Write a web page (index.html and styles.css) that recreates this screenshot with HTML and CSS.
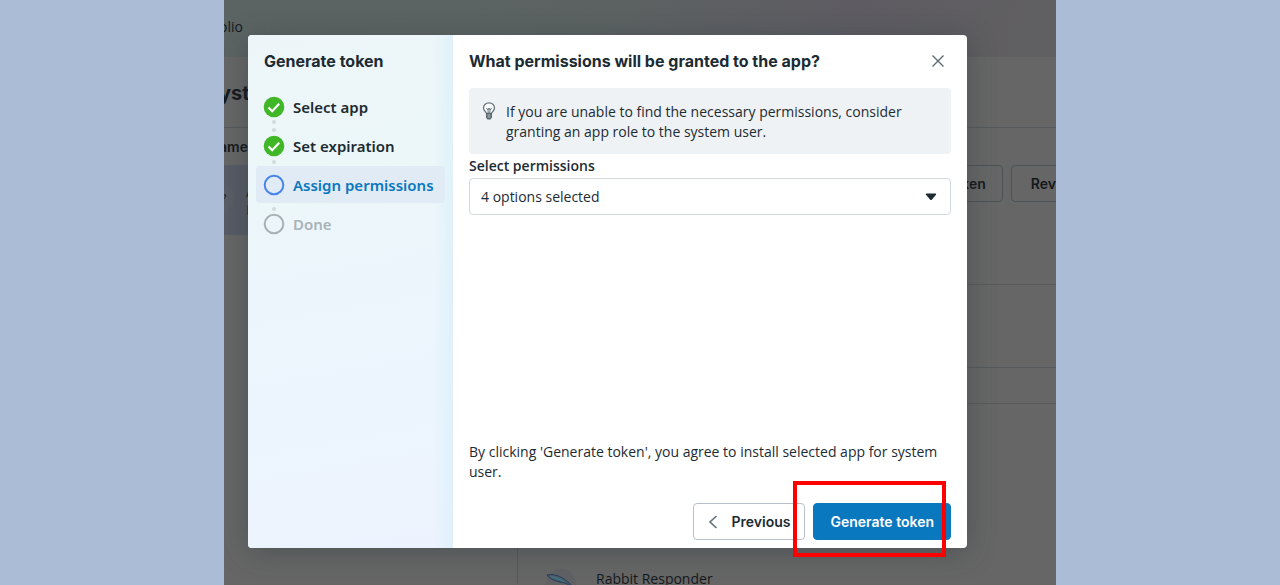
FILE: index.html
```html
<!DOCTYPE html>
<html lang="en">
<head>
  <meta charset="UTF-8">
  <title>Generate token</title>
  <link rel="stylesheet" href="styles.css">
</head>

<body>
  <div class="screen">
    <!-- page behind the dialog -->
    <div class="page">
      <header class="topbar">olio</header>
      <h1 class="page-title">ystem users</h1>
      <div class="columns">
        <div class="users">
          <div class="users-head">ame</div>
          <div class="user">
            <svg class="user-icon" width="30" height="30" viewBox="0 0 30 30">
              <circle cx="15" cy="15" r="15" fill="#5a5d65"/>
              <path d="M13 12h9q0 3-4 5l-3 3M21 12l-6 3" fill="none" stroke="#25292e"/>
            </svg>
            <div>
              <div>Admin</div>
              <div class="user-id">ID: 615</div>
            </div>
          </div>
        </div>
        <div class="detail">
          <div class="actions">
            <button class="page-button">Generate token</button>
            <button class="page-button">Revoke tokens</button>
          </div>
          <div class="info"></div>
          <div class="tabs"></div>
          <div class="asset">
            <svg width="30" height="30" viewBox="0 0 30 30">
              <circle cx="15" cy="15" r="15" fill="#5f6164"/>
              <path d="M1 6c5-1 11 0 17 4 4 3 7 5 8 8-5-4-8-4-12-5C9 12 4 10 1 6z" fill="#4d6069" stroke="#26385c"/>
              <path d="M5 8c5 1 9 2 13 5" fill="none" stroke="#2f7f92"/>
            </svg>
            <span>Rabbit Responder</span>
          </div>
        </div>
      </div>
    </div>

    <div class="dialog" role="dialog" aria-labelledby="dialog-title">
      <div class="steps">
        <h2>Generate token</h2>
        <ol>
          <li class="done">
            <svg width="22" height="22" viewBox="0 0 22 22">
              <circle cx="11" cy="11" r="10.3" fill="#3fb726"/>
              <path d="M5.5 11.5l3.7 3.7 7-7.4" fill="none" stroke="#fff" stroke-width="2.2"/>
            </svg>
            Select app
          </li>
          <li class="done">
            <svg width="22" height="22" viewBox="0 0 22 22">
              <circle cx="11" cy="11" r="10.3" fill="#3fb726"/>
              <path d="M5.5 11.5l3.7 3.7 7-7.4" fill="none" stroke="#fff" stroke-width="2.2"/>
            </svg>
            Set expiration
          </li>
          <li class="current">
            <svg width="22" height="22" viewBox="0 0 22 22">
              <circle cx="11" cy="11" r="9.3" fill="none" stroke="#4684ea" stroke-width="2"/>
            </svg>
            Assign permissions
          </li>
          <li class="todo">
            <svg width="22" height="22" viewBox="0 0 22 22">
              <circle cx="11" cy="11" r="9.3" fill="none" stroke="#aab1b5" stroke-width="2"/>
            </svg>
            Done
          </li>
        </ol>
      </div>

      <div class="content">
        <div class="content-head">
          <h2 id="dialog-title">What permissions will be granted to the app?</h2>
          <button class="close" aria-label="Close">
            <svg width="14" height="14" viewBox="0 0 14 14">
              <path d="M1.5 1.5l11 11M12.5 1.5l-11 11" fill="none" stroke="#5d6b73" stroke-width="1.4"/>
            </svg>
          </button>
        </div>

        <div class="tip">
          <svg width="14" height="18" viewBox="0 0 14 18">
            <path d="M4.5 11.5C4.3 10 1.5 9 1.5 6a5.5 5.2 0 0 1 11 0c0 3-2.8 4-3 5.500z" fill="#fafcfd" stroke="#68757c" stroke-width="1.3"/>
            <path d="M4.5 6l1.500 2 1-2 1 2 1.500-2M6 8l.3 4M8 8l-.3 4" fill="none" stroke="#68757c"/>
            <path d="M4 11h6v4.500L8.500 17.500h-3L4 15.500z" fill="#5a6870"/>
            <path d="M5.500 13h3M5.500 15h3" stroke="#b8c1c7"/>
          </svg>
          <p>If you are unable to find the necessary permissions, consider granting an app role to the system user.</p>
        </div>

        <label for="permissions">Select permissions</label>
        <div class="select">
          <select id="permissions">
            <option>4 options selected</option>
          </select>
          <svg width="12" height="8" viewBox="0 0 12 8">
            <path d="M1.5.5h9q1.200.2.500 1.200L7 6.500q-1 1-2 0L1 1.700Q.3.700 1.500.5z" fill="#1c2b33"/>
          </svg>
        </div>

        <p class="agree">By clicking 'Generate token', you agree to install selected app for system user.</p>
        <div class="buttons">
          <button class="previous">
            <svg width="10" height="14" viewBox="0 0 10 14">
              <path d="M8.500 1L2 7l6.500 6" fill="none" stroke="#67747b" stroke-width="1.7"/>
            </svg>
            Previous
          </button>
          <div class="marked">
            <button class="generate">Generate token</button>
            <span class="marker"></span>
          </div>
        </div>
      </div>
    </div>
  </div>
</body>
</html>
```
FILE: styles.css
```css
* {
  box-sizing: border-box;
}
body, h1, h2, p, ol {
  margin: 0;
  padding: 0;
}
body {
  background: #abbcd6;
  color: #1c2b33;
  font: 14px/20px "Open Sans", sans-serif;
}
button, select {
  font: inherit;
  color: inherit;
}
svg {
  flex: none;
}
.screen {
  position: relative;
  width: 65%;
  height: 100vh;
  margin: 0 auto;
  overflow: hidden;
  background: #666;
}

/* page behind, scrolled a little to the right */
.page {
  margin-left: -5px;
  color: #14191c;
}
.topbar {
  height: 57px;
  padding-top: 17px;
  background: linear-gradient(100deg, #5b6463 0%, #5c6262 45%, #5e5c62 75%, #605f61 100%);
}
.page-title {
  height: 71px;
  padding-top: 26px;
  border-bottom: 1px solid #565a5d;
  font: bold 20px/20px "Inter", sans-serif;
}
.columns {
  display: flex;
}
.users {
  width: 299px;
  height: 100vh;
  border-right: 1px solid #54585b;
}
.users-head {
  height: 37px;
  padding-top: 9px;
  font: 600 14px/20px "Inter", sans-serif;
}
.user {
  display: flex;
  gap: 12px;
  height: 70px;
  padding: 18px 0;
  background: #575b65;
  line-height: 18px;
}
.user-icon {
  margin-left: -15px;
}
.user-id {
  color: #5c2412;
}
.detail {
  flex: 1;
  min-width: 0;
}
.actions {
  display: flex;
  justify-content: flex-end;
  gap: 8px;
  height: 157px;
  padding-top: 37px;
  margin-right: -93px;
  border-bottom: 1px solid #565a5d;
}
.page-button {
  width: 138px;
  height: 37px;
  border: 1px solid #4c5357;
  border-radius: 4px;
  background: none;
  font: 600 14px/20px "Inter", sans-serif;
}
.info {
  height: 83px;
  border-bottom: 1px solid #565a5d;
}
.tabs {
  height: 36px;
  border-bottom: 1px solid #565a5d;
}
.asset {
  display: flex;
  gap: 20px;
  padding: 165px 28px 0;
}

/* dialog */
.dialog {
  position: absolute;
  top: 35px;
  left: 24px;
  right: 89px;
  bottom: 37px;
  display: flex;
  border-radius: 4px;
  background: #fff;
  box-shadow: 0 4px 28px rgba(40, 55, 60, 0.4);
}
.screen h2 {
  font: bold 16px/20px "Inter", sans-serif;
}
.steps {
  width: 205px;
  padding: 16px 8px;
  border-radius: 4px 0 0 4px;
  background:
    linear-gradient(90deg, rgba(222, 242, 251, 0) 90%, rgba(218, 239, 250, 0.7) 100%),
    linear-gradient(170deg, #edf5f8 0%, #ecf7f9 28%, #edf5fc 48%, #ecf5fd 70%, #edf3fe 100%);
}
.steps h2 {
  padding: 0 8px;
}
.steps ol {
  display: flex;
  flex-direction: column;
  gap: 2px;
  margin-top: 17px;
  list-style: none;
}
.steps li {
  position: relative;
  display: flex;
  align-items: center;
  gap: 8px;
  height: 37px;
  padding: 0 7px;
  border-radius: 4px;
  font: 600 15px/20px "Noto Sans", sans-serif;
}
/* dots between the steps */
.steps li + li::before,
.steps .done:first-child::after {
  content: "";
  position: absolute;
  left: 16px;
  top: -6px;
  width: 4px;
  height: 4px;
  border-radius: 50%;
  background: #d3dadd;
}
.steps .done:first-child::after {
  top: 32px;
}
.steps .done + .done::before {
  top: 1px;
}
.steps li.todo::before {
  top: 2px;
}
.steps li.current {
  background: #e0ebf6;
  color: #0a78be;
}
.steps li.todo {
  color: #a9b2b8;
}

.content {
  flex: 1;
  display: flex;
  flex-direction: column;
  padding: 16px 16px 8px;
}
.content-head {
  display: flex;
  justify-content: space-between;
}
.close {
  display: flex;
  align-items: center;
  padding: 0 6px;
  border: 0;
  background: none;
}
.tip {
  display: flex;
  gap: 10px;
  margin-top: 17px;
  padding: 14px 32px 12px 13px;
  border-radius: 4px;
  background: #eff2f5;
}
.content label {
  margin-top: 2px;
  font-weight: 600;
}
.select {
  position: relative;
  margin-top: 2px;
}
.select select {
  width: 100%;
  height: 37px;
  padding: 0 11px;
  appearance: none;
  border: 1px solid #d3d9de;
  border-radius: 4px;
  background: #fff;
}
.select svg {
  position: absolute;
  right: 14px;
  top: 15px;
  pointer-events: none;
}
.agree {
  margin-top: auto;
}
.buttons {
  display: flex;
  justify-content: flex-end;
  gap: 8px;
  margin-top: 21px;
}
.previous, .generate {
  display: flex;
  align-items: center;
  gap: 14px;
  height: 37px;
  padding: 0 14px;
  border: 1px solid #b8c1ca;
  border-radius: 4px;
  background: #fff;
  font: 600 14px/20px "Inter", sans-serif;
}
.generate {
  padding: 0 16px;
  border-color: #0a78be;
  background: #0a78be;
  color: #fff;
}
.marked {
  position: relative;
}
.marker {
  position: absolute;
  top: -22px;
  right: 5px;
  bottom: -17px;
  left: -20px;
  border: 4px solid #f00;
  pointer-events: none;
}
```
